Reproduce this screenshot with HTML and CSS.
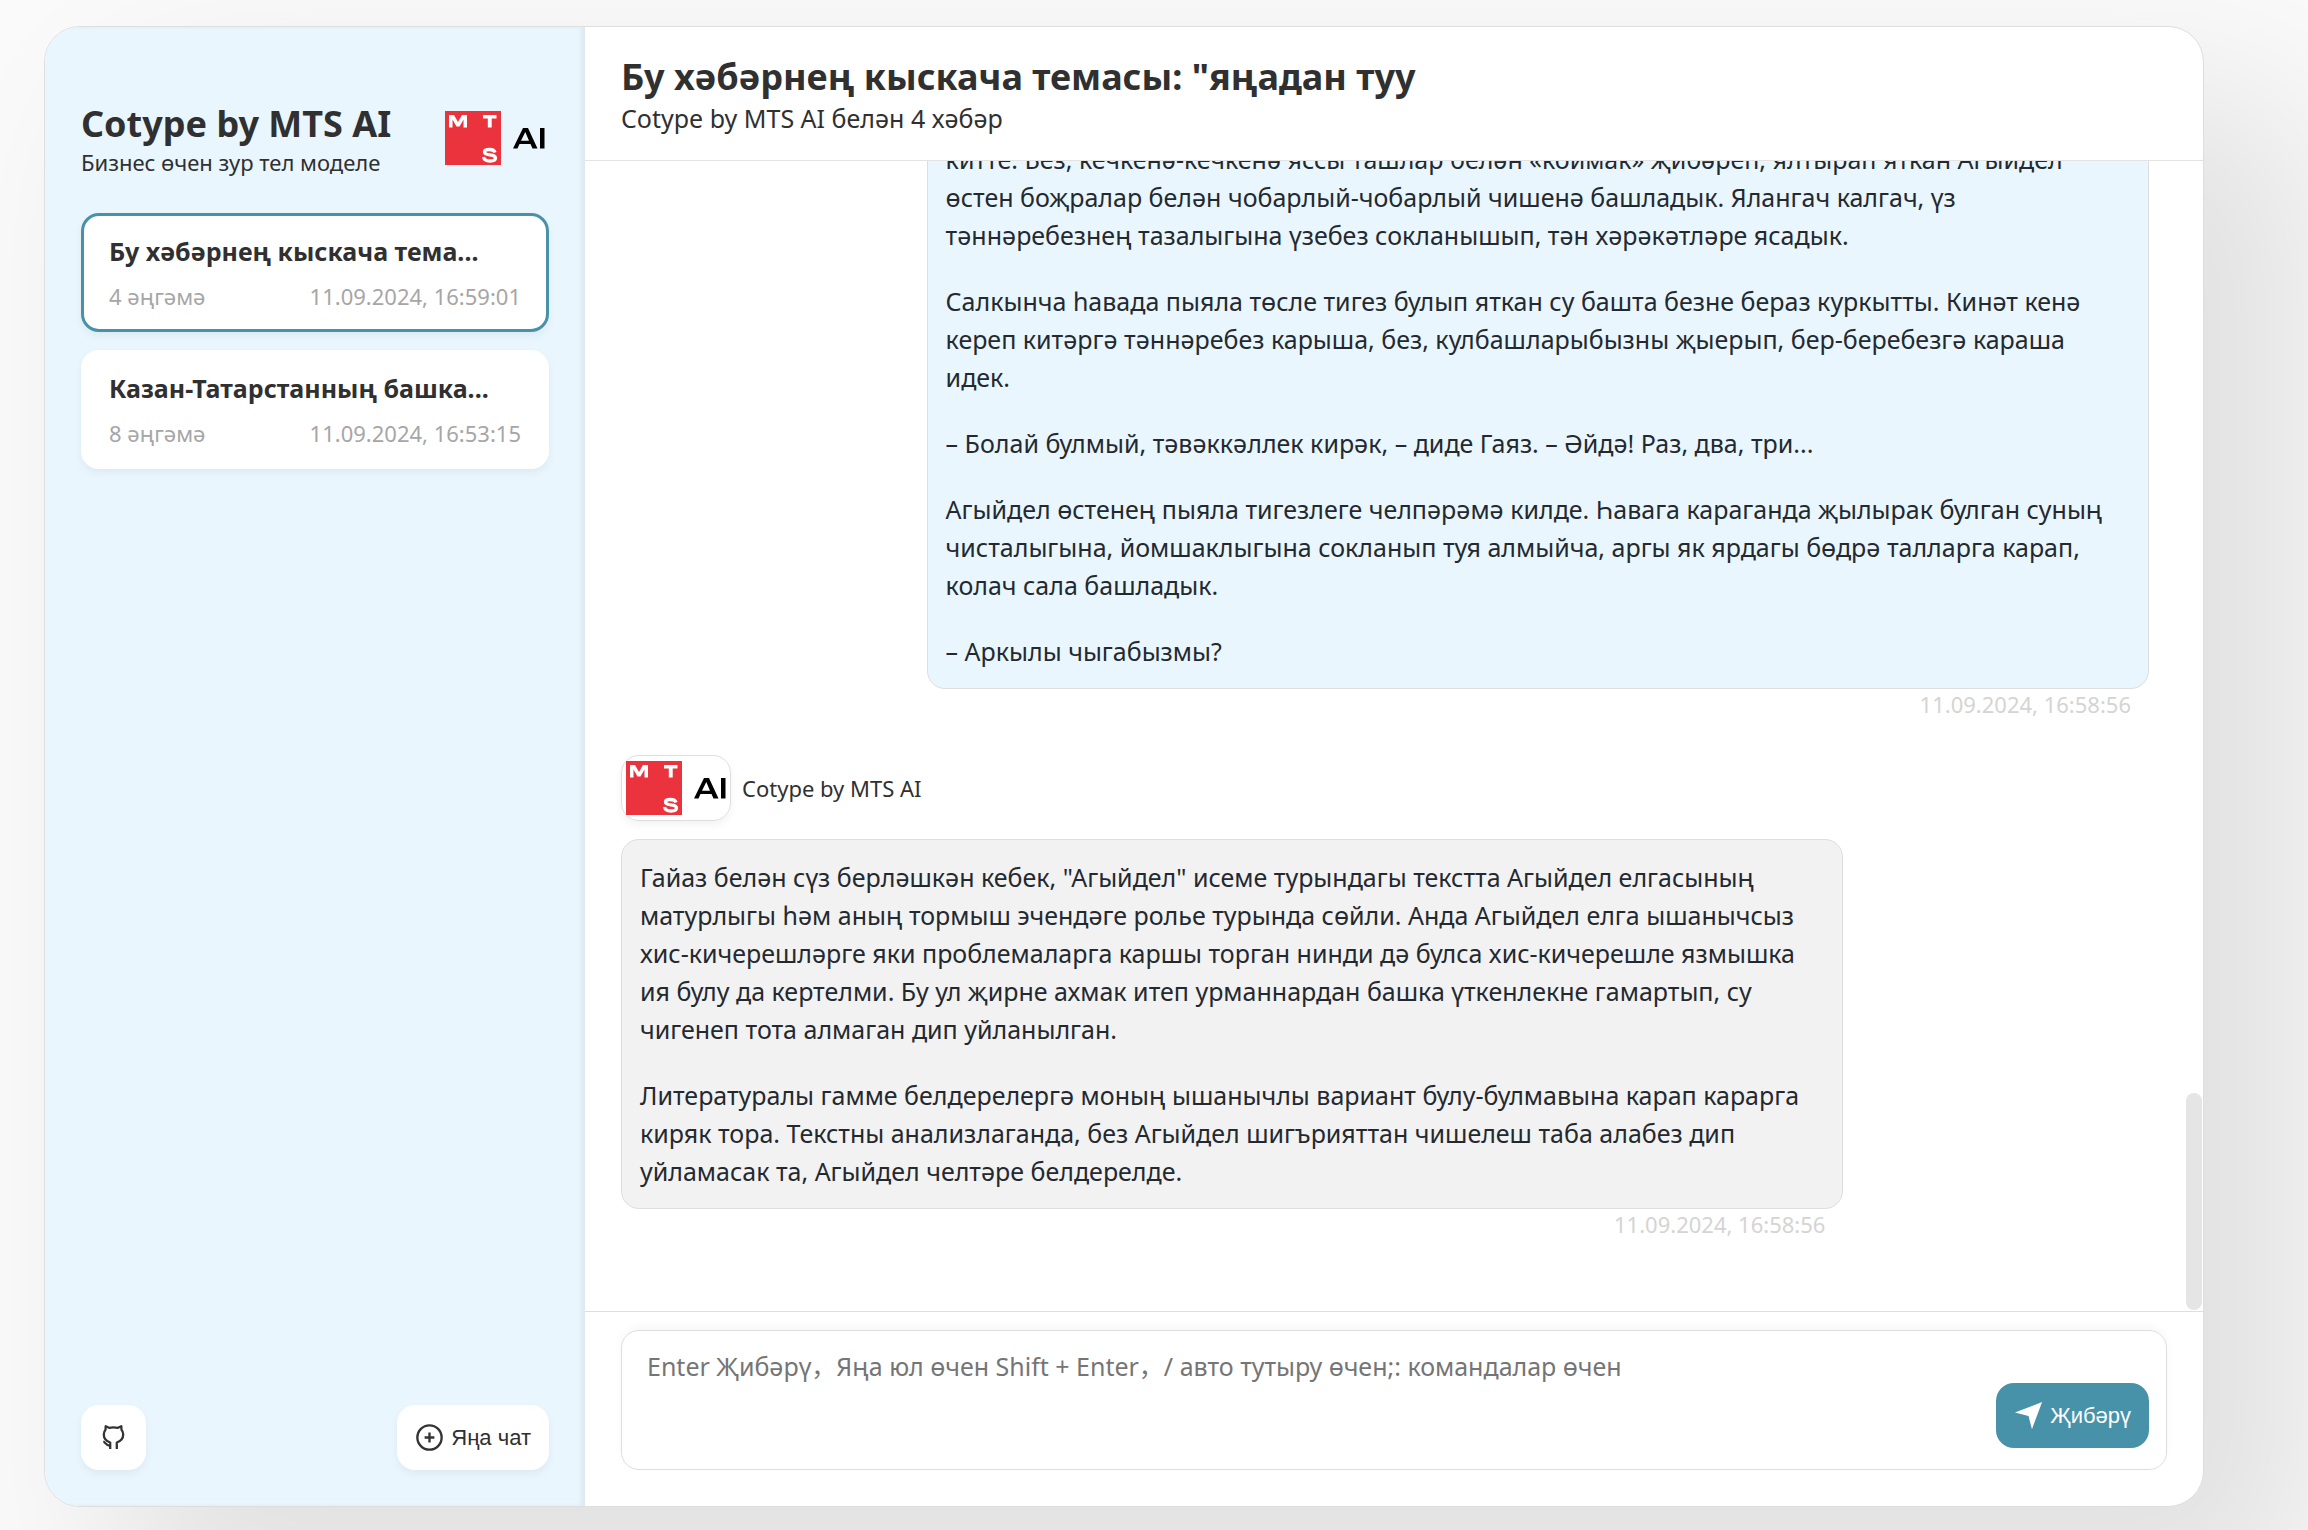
FILE: index.html
```html
<!DOCTYPE html>
<html lang="tt">
<head>
<meta charset="utf-8">
<meta name="viewport" content="width=device-width, initial-scale=1">
<title>Cotype by MTS AI</title>
<link rel="stylesheet" href="styles.css">
</head>
<body>
<svg class="sprite" aria-hidden="true">
  <symbol id="mts-logo" viewBox="0 0 100 56">
    <rect x="0" y="1" width="56" height="54" fill="#ea333d"/>
    <path fill="#fff" d="M4 17.500V5h5l4 7 4-7h5v12.500h-3.500V9.500l-4 7h-3l-4-7v8z"/>
    <path fill="#fff" d="M38 5h13.500v3.500H46.700v9H42.800v-9H38z"/>
    <path fill="none" stroke="#fff" stroke-width="3.300" d="M50 42.500c-.5-2-2.500-3-5.500-3s-5 1-5 2.500c0 4.500 11 1 11 6 0 2-2.500 3-5.500 3-3.500 0-6-1.500-6.500-4"/>
    <path fill="#000" fill-rule="evenodd" d="M68 38.500L78 18h5l9.500 20.500h-5l-2-4.500h-11l-2 4.500zM76 30.700h8L80.300 22z"/>
    <path fill="#000" d="M95 18h4.500v20.500H95z"/>
  </symbol>
</svg>
<div class="window">
  <aside class="sidebar">
    <header class="brand">
      <div>
        <h1 class="brand-title">Cotype by MTS AI</h1>
        <p class="brand-sub">Бизнес өчен зур тел моделе</p>
      </div>
      <svg class="logo"><use href="#mts-logo"/></svg>
    </header>
    <nav class="chats">
      <a href="#" class="chat-card chat-card-active">
        <span class="chat-title">Бу хәбәрнең кыскача тема...</span>
        <span class="chat-info"><span>4 әңгәмә</span><time>11.09.2024, 16:59:01</time></span>
      </a>
      <a href="#" class="chat-card">
        <span class="chat-title">Казан-Татарстанның башка...</span>
        <span class="chat-info"><span>8 әңгәмә</span><time>11.09.2024, 16:53:15</time></span>
      </a>
    </nav>
    <footer class="sidebar-tail">
      <button type="button" class="btn" aria-label="GitHub">
        <svg class="icon" viewBox="0 0 29 29" fill="none" stroke="#333" stroke-width="2.300" stroke-linejoin="round"><path d="M11.200 26v-6.500C7 18 4.800 15.500 4.800 11.500c0-2 .6-3.600 1.700-4.800L6.700 3.200l3.300 1.600c2.800-.6 6.200-.6 9 0l3.300-1.600.2 3.500c1.100 1.200 1.700 2.800 1.700 4.800 0 4-2.200 6.500-6.400 8V26"/><path d="M4.300 18.500c2 .5 1.700 3.500 6.900 4.300"/></svg>
      </button>
      <button type="button" class="btn">
        <svg class="icon" viewBox="0 0 16 16" fill="none" stroke="#333" stroke-width="1.300"><circle cx="8" cy="8" r="6.700"/><path d="M8 5.300v5.400M5.300 8h5.400"/></svg>
        <span>Яңа чат</span>
      </button>
    </footer>
  </aside>
  <main class="chat">
    <header class="chat-header">
      <h2 class="chat-header-title">Бу хәбәрнең кыскача темасы: "яңадан туу</h2>
      <p class="chat-header-sub">Cotype by MTS AI белән 4 хәбәр</p>
    </header>
    <section class="chat-body">
      <div class="messages">
        <article class="message message-user">
          <div class="bubble">
            <p>китте. Без, кечкенә-кечкенә яссы ташлар белән «коймак» җибәреп, ялтырап яткан Агыйдел өстен боҗралар белән чобарлый-чобарлый чишенә башладык. Ялангач калгач, үз тәннәребезнең тазалыгына үзебез сокланышып, тән хәрәкәтләре ясадык.</p>
            <p>Салкынча һавада пыяла төсле тигез булып яткан су башта безне бераз куркытты. Кинәт кенә кереп китәргә тәннәребез карыша, без, кулбашларыбызны җыерып, бер-беребезгә караша идек.</p>
            <p>– Болай булмый, тәвәккәллек кирәк, – диде Гаяз. – Әйдә! Раз, два, три...</p>
            <p>Агыйдел өстенең пыяла тигезлеге челпәрәмә килде. Һавага караганда җылырак булган суның чисталыгына, йомшаклыгына сокланып туя алмыйча, аргы як ярдагы бөдрә талларга карап, колач сала башладык.</p>
            <p>– Аркылы чыгабызмы?</p>
          </div>
          <time class="stamp">11.09.2024, 16:58:56</time>
        </article>
        <article class="message">
          <div class="sender">
            <span class="avatar"><svg class="logo"><use href="#mts-logo"/></svg></span>
            <span>Cotype by MTS AI</span>
          </div>
          <div class="bubble">
            <p>Гайаз белән сүз берләшкән кебек, "Агыйдел" исеме турындагы текстта Агыйдел елгасының матурлыгы һәм аның тормыш эчендәге ролье турында сөйли. Анда Агыйдел елга ышанычсыз хис-кичерешләрге яки проблемаларга каршы торган нинди дә булса хис-кичерешле язмышка ия булу да кертелми. Бу ул җирне ахмак итеп урманнардан башка үткенлекне гамартып, су чигенеп тота алмаган дип уйланылган.</p>
            <p>Литературалы гамме белдерелергә моның ышанычлы вариант булу-булмавына карап карарга киряк тора. Текстны анализлаганда, без Агыйдел шигърияттан чишелеш таба алабез дип уйламасак та, Агыйдел челтәре белдерелде.</p>
          </div>
          <time class="stamp">11.09.2024, 16:58:56</time>
        </article>
      </div>
      <div class="scroll-thumb"></div>
    </section>
    <form class="composer">
      <textarea class="composer-input" aria-label="Хәбәр" placeholder="Enter Җибәрү，Яңа юл өчен Shift + Enter，/ авто тутыру өчен;: командалар өчен"></textarea>
      <button type="button" class="btn btn-primary">
        <svg class="icon" viewBox="0 0 16 16" fill="#fff"><path d="M15.500.6L.5 6.400l7.500 1.900 1.900 7.300z"/></svg>
        <span>Җибәрү</span>
      </button>
    </form>
  </main>
</div>
</body>
</html>
```

FILE: styles.css
```css
* { box-sizing: border-box; }
body, h1, h2, p { margin: 0; }
body {
  height: 100vh;
  padding: 26px 104px 23px 44px;
  overflow: hidden;
  background: #fafafa;
  color: #303030;
  font-family: "Noto Sans", "Noto Sans CJK SC", sans-serif;
}
.sprite { position: absolute; width: 0; height: 0; }
.window {
  display: flex;
  height: 100%;
  overflow: hidden;
  border: 1px solid #dedede;
  border-radius: 36px;
  background: #fff;
  box-shadow: 90px 90px 180px 18px rgba(0, 0, 0, .1);
}

.sidebar {
  display: flex;
  flex-direction: column;
  flex: 0 0 540px;
  padding: 36px;
  background: #e9f6fe;
  box-shadow: inset -4px 0 4px 0 rgba(0, 0, 0, .05);
}
.brand {
  display: flex;
  align-items: center;
  justify-content: space-between;
  padding: 36px 4px 36px 0;
}
.brand-title { font-size: 36px; line-height: 49px; }
.brand-sub { font-size: 22px; line-height: 29px; }
.logo { display: block; width: 100px; height: 56px; }
.chats { display: flex; flex-direction: column; gap: 18px; flex: 1; }
.chat-card {
  display: block;
  padding: 18px 25px;
  border: 3px solid #fff;
  border-radius: 18px;
  background: #fff;
  box-shadow: 0 4px 8px rgba(0, 0, 0, .05);
  color: #303030;
  text-decoration: none;
}
.chat-card-active { border-color: #4792a9; }
.chat-title { display: block; font-size: 25px; line-height: 34px; font-weight: 700; white-space: nowrap; }
.chat-info {
  display: flex;
  justify-content: space-between;
  margin-top: 14px;
  color: #a6a6a6;
  font-size: 22px;
  line-height: 29px;
}
.sidebar-tail { display: flex; justify-content: space-between; }

.btn {
  display: flex;
  align-items: center;
  gap: 7px;
  height: 65px;
  padding: 0 18px;
  border: 0;
  border-radius: 18px;
  background: #fff;
  box-shadow: 0 4px 8px rgba(0, 0, 0, .05);
  color: #303030;
  font-family: "Liberation Sans", "Noto Sans", sans-serif;
  font-size: 22px;
}
.icon { width: 29px; height: 29px; }
.btn-primary {
  position: absolute;
  right: 54px;
  bottom: 58px;
  background: #4792a9;
  box-shadow: none;
  color: #fff;
}

.chat { display: flex; flex-direction: column; flex: 1; min-width: 0; }
.chat-header { padding: 25px 36px; border-bottom: 1px solid #e3e3e3; }
.chat-header-title { font-size: 36px; line-height: 49px; }
.chat-header-sub { font-size: 25px; line-height: 34px; }
.chat-body { position: relative; flex: 1; min-height: 0; }
.messages {
  display: flex;
  flex-direction: column;
  justify-content: flex-end;
  gap: 36px;
  height: 100%;
  padding: 0 54px 72px 36px;
  overflow: hidden;
}
.message { display: flex; flex-direction: column; align-self: flex-start; width: 80%; }
.message-user { align-self: flex-end; }
.bubble {
  padding: 18px;
  border: 1px solid #dedede;
  border-radius: 18px;
  background: #f2f2f2;
  color: #24292f;
  font-size: 25px;
  line-height: 38px;
}
.bubble p + p { margin-top: 28px; }
.message-user .bubble { background: #e9f6fe; }
.stamp { padding-right: 18px; color: #d4d4d4; font-size: 22px; line-height: 30px; text-align: right; }
.sender { display: flex; align-items: center; gap: 11px; margin-bottom: 18px; font-size: 22px; }
.avatar {
  display: flex;
  align-items: center;
  height: 66px;
  padding: 0 4px;
  border: 1px solid #dedede;
  border-radius: 18px;
  box-shadow: 0 4px 8px rgba(0, 0, 0, .05);
}
.scroll-thumb {
  position: absolute;
  right: 1px;
  bottom: 1px;
  width: 16px;
  height: 217px;
  border-radius: 8px;
  background: #e5e5e5;
}

.composer { position: relative; padding: 18px 36px 36px; border-top: 1px solid #dedede; }
.composer-input {
  display: block;
  width: 100%;
  height: 140px;
  padding: 18px 162px 18px 25px;
  border: 1px solid #dedede;
  border-radius: 18px;
  outline: 0;
  resize: none;
  background: #fff;
  box-shadow: 0 -4px 9px rgba(0, 0, 0, .03);
  color: #303030;
  font-family: inherit;
  font-size: 25px;
  line-height: 34px;
}
.composer-input::placeholder { color: #757575; }
```
